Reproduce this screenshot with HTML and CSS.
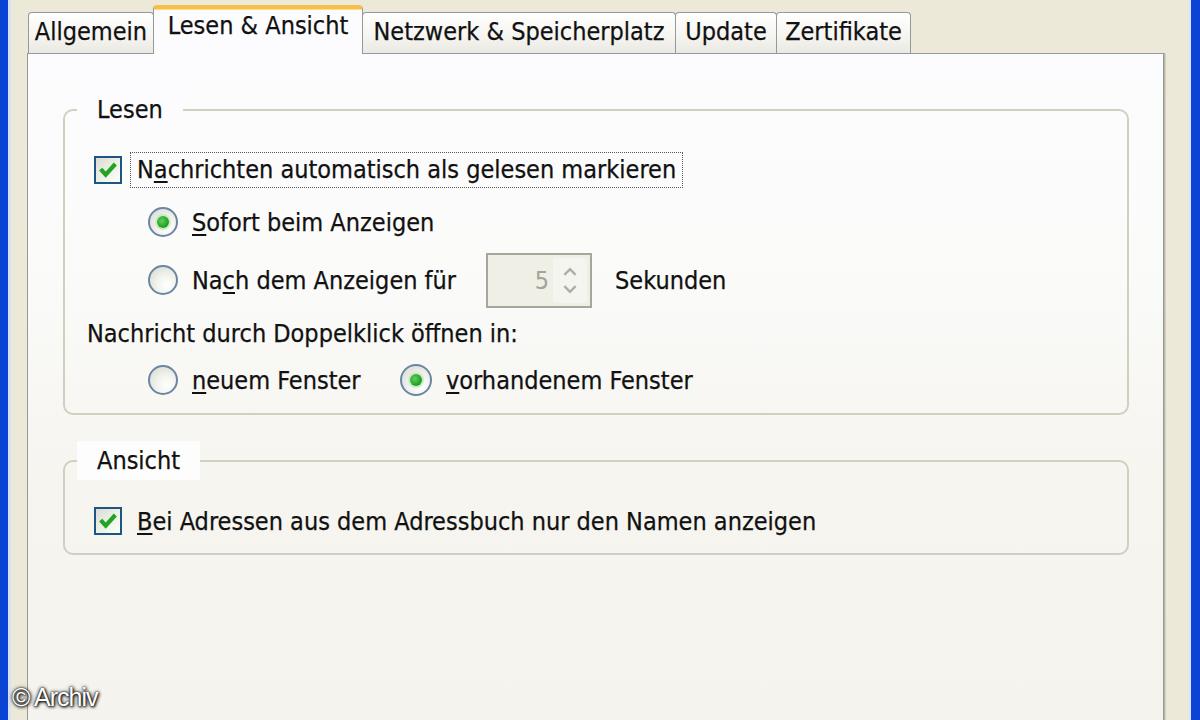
FILE: index.html
```html
<!DOCTYPE html>
<html lang="de">
<head>
<meta charset="utf-8">
<title>Optionen – Lesen &amp; Ansicht</title>
<link rel="stylesheet" href="styles.css">
</head>
<body>
<div class="screen">
  <div class="frame-l"></div>
  <div class="client">
    <div class="tabs">
      <div class="tab t1">Allgemein</div>
      <div class="tab sel t2">Lesen &amp; Ansicht</div>
      <div class="tab t3">Netzwerk &amp; Speicherplatz</div>
      <div class="tab t4">Update</div>
      <div class="tab t5">Zertifikate</div>
    </div>
    <div class="panel">
      <fieldset class="group g-lesen">
        <legend>Lesen</legend>
        <div class="gbody gb-lesen">
          <div class="row r1">
            <span class="cb"><svg viewBox="0 0 24 24"><path d="M4 11 L9.5 17 L20 5.5" /></svg></span>
            <span class="focus">N<u>a</u>chrichten automatisch als gelesen markieren</span>
          </div>
          <div class="row r2 indent">
            <span class="rb on"><span class="dot"></span></span>
            <span><u>S</u>ofort beim Anzeigen</span>
          </div>
          <div class="row r3 indent">
            <span class="rb"></span>
            <span class="fixlbl">Na<u>c</u>h dem Anzeigen für</span>
            <span class="spin">
              <span class="spin-val">5</span>
              <span class="spin-btns">
                <svg viewBox="0 0 30 48"><path d="M9 18 L15 12 L21 18" /><path d="M9 30 L15 36 L21 30" /></svg>
              </span>
            </span>
            <span class="after-spin">Sekunden</span>
          </div>
          <div class="row r4 plain">Nachricht durch Doppelklick öffnen in:</div>
          <div class="row r5 indent">
            <span class="opt first"><span class="rb"></span><span><u>n</u>euem Fenster</span></span>
            <span class="opt"><span class="rb on"><span class="dot"></span></span><span><u>v</u>orhandenem Fenster</span></span>
          </div>
        </div>
      </fieldset>
      <fieldset class="group g-ansicht">
        <legend>Ansicht</legend>
        <div class="gbody gb-ansicht">
          <div class="row r1">
            <span class="cb"><svg viewBox="0 0 24 24"><path d="M4 11 L9.5 17 L20 5.5" /></svg></span>
            <span class="lbl"><u>B</u>ei Adressen aus dem Adressbuch nur den Namen anzeigen</span>
          </div>
        </div>
      </fieldset>
    </div>
  </div>
  <div class="frame-r"></div>
  <div class="wm">© Archiv</div>
</div>
</body>
</html>
```
FILE: styles.css
```css
* { box-sizing: border-box; }
html, body { margin: 0; padding: 0; }
body {
  width: 1200px;
  height: 720px;
  overflow: hidden;
  font-family: "DejaVu Sans Condensed", "DejaVu Sans", sans-serif;
  font-size: 25px;
  color: #111;
  -webkit-text-stroke: 0.25px #111;
}
.screen {
  position: relative;
  display: flex;
  width: 1200px;
  height: 720px;
  overflow: hidden;
}
.frame-l {
  width: 11px;
  background: #0a44d4;
  border-right: 3px solid #d7e2f6;
}
.frame-r {
  width: 11px;
  background: #0a44d4;
  border-left: 2px solid #d7e2f6;
}
.client {
  flex: 1;
  display: flex;
  flex-direction: column;
  background: #ece9d8;
  padding: 5px 0 0 16px;
}
.tabs {
  display: flex;
  align-items: flex-end;
  height: 48px;
  padding-left: 1px;
  position: relative;
  z-index: 2;
}
.tab {
  height: 41px;
  padding: 4px 0 0 0;
  text-align: center;
  line-height: 29px;
  white-space: nowrap;
  border: 1px solid #919b9c;
  border-bottom: none;
  border-radius: 4px 4px 0 0;
  background: linear-gradient(#ffffff, #f5f4f0 60%, #e9e8e2);
}
.tab + .tab { margin-left: -1px; }
.t1 { width: 126px; }
.t2 { width: 210px; }
.t3 { width: 314px; }
.t4 { width: 102px; }
.t5 { width: 135px; }
.tab.sel {
  height: 49px;
  margin-bottom: -1px;
  padding-top: 2px;
  background: #fcfcfe;
  border-top: 4px solid #f8bf48;
  box-shadow: inset 0 1px 0 #fde08e;
  position: relative;
  z-index: 3;
}
.panel {
  flex: 1;
  width: 1137px;
  border: 1px solid #919b9c;
  border-bottom: none;
  background: linear-gradient(#fcfcfe 0px, #fbfbfa 200px, #f6f5f0 420px, #f4f3ee 700px);
  box-shadow: 1px 0 0 #b9b7a9, 2px 0 0 #d6d3c4;
  padding: 36px 0 0 35px;
}
.group {
  width: 1066px;
  margin: 0;
  padding: 0;
  min-width: 0;
  border: 2px solid #d0d0bf;
  border-radius: 10px;
}
.group legend {
  margin-left: 12px;
  padding: 5px 20px;
  line-height: 29px;
  background: #fcfcfe;
}
.g-ansicht { margin-top: 26px; }
.g-ansicht legend { background: #fdfdfd; }
.gbody { padding-left: 22px; }
.gb-lesen { padding-top: 17px; padding-bottom: 9px; }
.gb-ansicht { padding-top: 17px; padding-bottom: 8px; }
.row {
  display: flex;
  align-items: center;
  white-space: nowrap;
}
.gb-lesen .r1 { height: 48px; }
.r2 { height: 56px; }
.r3 { height: 60px; }
.r4 { height: 46px; }
.r5 { height: 48px; }
.gb-ansicht .r1 { height: 48px; }
.r1 { padding-left: 7px; }
.indent { padding-left: 61px; }
.cb {
  width: 28px;
  height: 28px;
  flex: none;
  border: 2px solid #1f5583;
  background: linear-gradient(135deg, #dcdcd4, #eef4e8 60%, #ffffff);
  margin-right: 8px;
  display: flex;
  align-items: center;
  justify-content: center;
}
.cb svg { width: 22px; height: 22px; }
.cb path { fill: none; stroke: #22a322; stroke-width: 4.6; stroke-linecap: butt; stroke-linejoin: miter; }
.focus {
  border: 1px dotted #555;
  padding: 2px 6px 3px 6px;
  line-height: 29px;
}
.lbl { padding-left: 7px; }
.rb {
  width: 30px;
  height: 30px;
  flex: none;
  border-radius: 50%;
  border: 2px solid #6a86a3;
  background: radial-gradient(circle at 65% 70%, #ffffff 0%, #f1f1ec 45%, #d6d6ce 100%);
  margin-right: 14px;
  display: flex;
  align-items: center;
  justify-content: center;
}
.rb .dot {
  width: 12px;
  height: 12px;
  border-radius: 50%;
  background: radial-gradient(circle at 40% 40%, #5fcf5f, #1f9a1f 70%);
  box-shadow: 0 0 0 2px #c8ecc4;
}
.fixlbl { width: 294px; }
.spin {
  display: flex;
  width: 106px;
  height: 55px;
  border: 2px solid #a7a69c;
  background: #efefe6;
  margin-right: 23px;
  -webkit-text-stroke: 0;
}
.spin-val {
  flex: 1;
  text-align: right;
  padding-right: 4px;
  line-height: 51px;
  color: #a3a39b;
}
.spin-btns {
  width: 34px;
  margin: 3px 3px 3px 0;
  background: #f5f5ef;
  border-radius: 3px;
  display: flex;
}
.spin-btns svg { width: 100%; height: 100%; }
.spin-btns path { fill: none; stroke: #aeaea4; stroke-width: 2.6; }
.plain { padding-left: 0; }
.opt { display: flex; align-items: center; }
.opt.first { width: 252px; }
.opt:not(.first) .rb { width: 32px; height: 32px; }
u { text-decoration-thickness: 2px; text-underline-offset: 3px; }
.wm {
  position: absolute;
  left: 12px;
  bottom: 8px;
  font-family: "Liberation Sans Narrow", "Liberation Sans", sans-serif;
  font-size: 25px;
  letter-spacing: -1px;
  color: #fff;
  -webkit-text-stroke: 0;
  text-shadow: 0 0 2px #000, 1px 1px 3px #000, 0 0 4px #333;
}
```
